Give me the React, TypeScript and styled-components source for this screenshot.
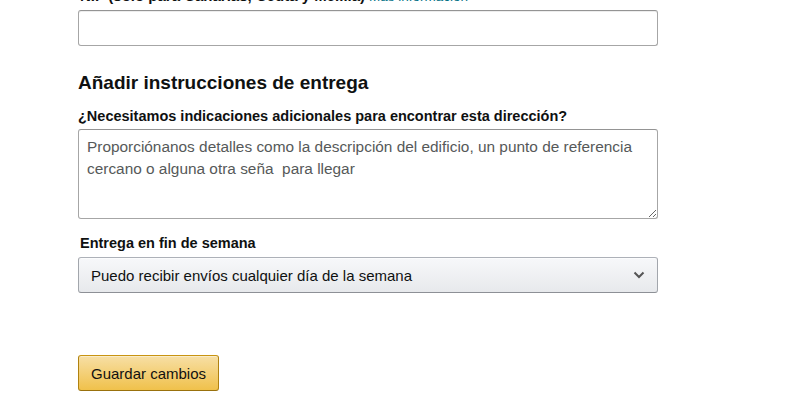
import React from 'react';
import styled, { createGlobalStyle } from 'styled-components';

const GlobalStyle = createGlobalStyle`
  html, body {
    margin: 0;
    padding: 0;
    background: #fff;
  }
  body {
    font-family: 'Liberation Sans', Arial, sans-serif;
    color: #0f1111;
    overflow: hidden;
  }
`;

const Page = styled.div`
  width: 580px;
  margin: -14px 0 0 78px;
  display: flex;
  flex-direction: column;
`;

const Label = styled.label<{ gap?: number }>`
  display: block;
  font-size: 14.5px;
  font-weight: 700;
  line-height: 19px;
  padding-left: 2px;
  margin-bottom: ${({ gap }) => gap ?? 4}px;
`;

const TopLabel = styled(Label)`
  font-size: 15px;
  line-height: 20px;
  margin-bottom: 3px;
`;

const Link = styled.a`
  font-weight: 400;
  color: #007185;
  font-size: 13.5px;
  margin-left: 4px;
  text-decoration: none;
`;

const TextInput = styled.input`
  box-sizing: border-box;
  width: 580px;
  height: 36px;
  border: 1px solid #a6a6a6;
  border-top-color: #949494;
  border-radius: 3px;
  box-shadow: 0 1px 0 rgba(255, 255, 255, 0.5), 0 1px 0 rgba(0, 0, 0, 0.07) inset;
  outline: none;
`;

const Heading = styled.h2`
  margin: 25px 0 0;
  font-size: 19px;
  font-weight: 700;
  line-height: 24px;
`;

const Question = styled(Label)`
  margin-top: 12px;
  padding-left: 0;
`;

const TextArea = styled.textarea`
  box-sizing: border-box;
  width: 580px;
  height: 90px;
  padding: 6px 8px;
  border: 1px solid #a6a6a6;
  border-top-color: #949494;
  border-radius: 3px;
  font-family: 'Liberation Sans', Arial, sans-serif;
  font-size: 15.4px;
  line-height: 22px;
  color: #0f1111;
  outline: none;
  &::placeholder {
    color: #565959;
  }
`;

const SelectLabel = styled(Label)`
  margin-top: 15px;
`;

const SelectBox = styled.div`
  box-sizing: border-box;
  width: 580px;
  height: 36px;
  display: flex;
  align-items: center;
  justify-content: space-between;
  padding: 0 12px;
  border: 1px solid;
  border-color: #adb1b8 #a2a6ac #8d9096;
  border-radius: 3px;
  background: linear-gradient(to bottom, #f7f8fa, #e7e9ec);
  box-shadow: 0 1px 0 rgba(255, 255, 255, 0.6) inset;
  font-size: 15px;
  color: #0f1111;
`;

const Chevron = styled.svg`
  width: 12px;
  height: 8px;
`;

const SaveButton = styled.button`
  margin-top: 62px;
  align-self: flex-start;
  box-sizing: border-box;
  width: 141px;
  height: 36px;
  border: 1px solid;
  border-color: #c89411 #b0820f #99710d;
  border-radius: 3px;
  background: linear-gradient(to bottom, #f7dfa5, #f0c14b);
  box-shadow: 0 1px 0 rgba(255, 255, 255, 0.4) inset;
  font-family: 'Liberation Sans', Arial, sans-serif;
  font-size: 15px;
  color: #111;
  padding: 0;
`;

export default function App() {
  return (
    <>
      <GlobalStyle />
      <Page>
        <TopLabel>
          NIF (solo para Canarias, Ceuta y Melilla)
          <Link href="#">Más información</Link>
        </TopLabel>
        <TextInput type="text" />
        <Heading>Añadir instrucciones de entrega</Heading>
        <Question gap={3}>¿Necesitamos indicaciones adicionales para encontrar esta dirección?</Question>
        <TextArea placeholder="Proporciónanos detalles como la descripción del edificio, un punto de referencia cercano o alguna otra seña  para llegar" />
        <SelectLabel>Entrega en fin de semana</SelectLabel>
        <SelectBox>
          <span>Puedo recibir envíos cualquier día de la semana</span>
          <Chevron viewBox="0 0 12 8">
            <path d="M1.5 1.5 L6 6 L10.5 1.5" fill="none" stroke="#555" strokeWidth="2" />
          </Chevron>
        </SelectBox>
        <SaveButton>Guardar cambios</SaveButton>
      </Page>
    </>
  );
}
